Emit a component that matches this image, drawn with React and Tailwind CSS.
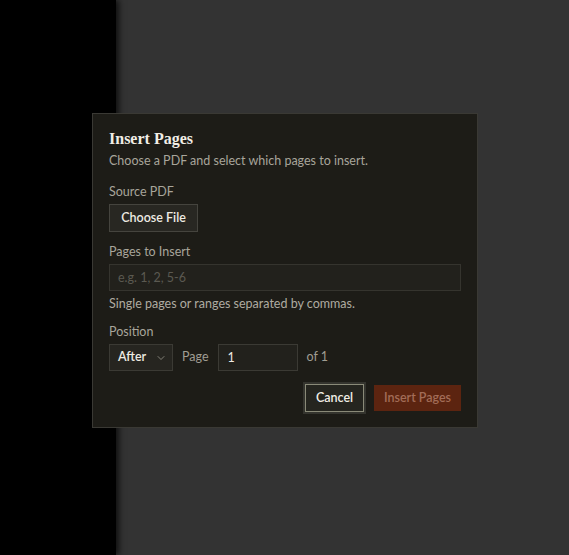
import { ChevronDown } from 'lucide-react';

const body = { fontFamily: 'Lato, "Noto Sans", sans-serif' };

export default function App() {
  return (
    <div className="relative flex h-[555px] w-full overflow-hidden bg-[#333333]" style={body}>
      {/* blurred sidebar behind the overlay */}
      <div className="h-full w-[116px] bg-black shadow-[3px_0_6px_rgba(0,0,0,0.7)]" />
      <div className="flex-1" />

      {/* Dialog */}
      <div className="absolute left-[92px] top-[113px] w-[386px] border border-[#3a3934] bg-[#1d1c17] px-4 pb-[15px] pt-[15px]">
        <h2 className="text-[16px] font-bold leading-[20px] text-[#f1eee6]" style={{ fontFamily: '"Liberation Serif", serif' }}>
          Insert Pages
        </h2>
        <p className="mt-1 text-[12.5px] leading-4 text-[#a8a59b]">Choose a PDF and select which pages to insert.</p>

        <div className="mt-[15px] text-[12.5px] leading-4 text-[#a8a59b]">Source PDF</div>
        <button className="mt-1 flex h-[28px] w-[89px] items-center justify-center border border-[#45443e] bg-[#282722] text-[12.5px] font-semibold text-[#eeebe3]">
          Choose File
        </button>

        <div className="mt-3 text-[12.5px] leading-4 text-[#a8a59b]">Pages to Insert</div>
        <input
          className="mt-1 block h-[27px] w-full border border-[#35342e] bg-[#22211c] px-[8px] text-[12.5px] text-[#eeebe3] outline-none placeholder:text-[#5b5951]"
          placeholder="e.g. 1, 2, 5-6"
        />
        <p className="mt-[5px] text-[12.5px] leading-4 text-[#aeaba1]">Single pages or ranges separated by commas.</p>

        <div className="mt-3 text-[12.5px] leading-4 text-[#a8a59b]">Position</div>
        <div className="mt-1 flex items-center gap-[9px] text-[12.5px]">
          <button className="flex h-[27px] w-[64px] items-center gap-[9px] border border-[#3b3a34] bg-[#262520] pl-[8px] font-semibold text-[#eeebe3]">
            After
            <ChevronDown size={12} strokeWidth={1.5} className="text-[#a09d93]" />
          </button>
          <span className="text-[#a09d93]">Page</span>
          <input
            className="h-[27px] w-[80px] border border-[#3b3a34] bg-[#22211c] px-[9px] text-[12.5px] text-[#eeebe3] outline-none"
            defaultValue="1"
          />
          <span className="text-[#a09d93]">of 1</span>
        </div>

        <div className="mt-[13px] flex items-center justify-end gap-[10px]">
          <button className="h-[28px] w-[59px] border border-[#8a8a78] bg-[#25251f] text-[12.5px] font-semibold text-[#f1eee6] shadow-[0_0_0_2px_#34342e]">
            Cancel
          </button>
          <button className="h-[26px] w-[87px] bg-[#5c2410] text-[12.5px] font-semibold text-[#a26c57]">
            Insert Pages
          </button>
        </div>
      </div>
    </div>
  );
}
